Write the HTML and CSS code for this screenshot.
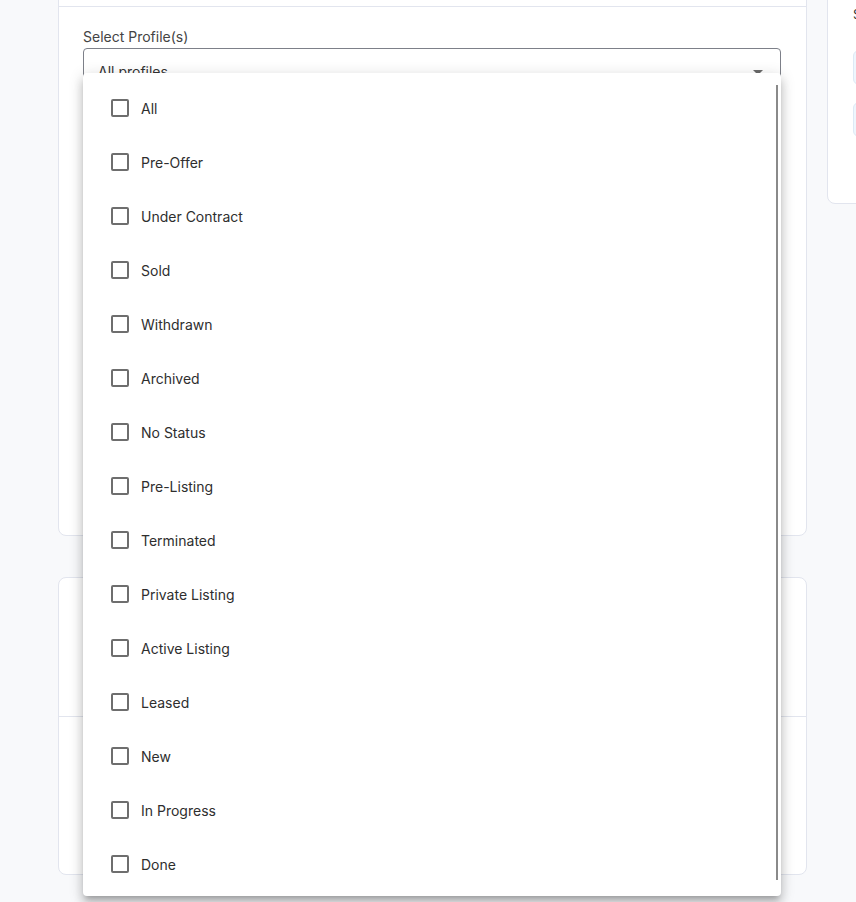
FILE: index.html
```html
<!DOCTYPE html>
<html lang="en">
<head>
<meta charset="utf-8">
<title>Select Profile(s)</title>
<link rel="stylesheet" href="styles.css">
</head>
<body>
<div class="page">
  <div class="main">
    <section class="card card-filter">
      <div class="card-head"></div>
      <div class="card-body">
        <label class="field-label">Select Profile(s)</label>
        <div class="select">
          <span class="select-value">All profiles</span>
          <svg class="select-arrow" width="24" height="24" viewBox="0 0 24 24"><path d="M7 10l5 5 5-5z" fill="#6b6b6b"/></svg>
        </div>
      </div>
    </section>
    <section class="card card-second">
      <div class="card-head tall"></div>
      <div class="card-body"></div>
    </section>
  </div>
  <aside class="side">
    <section class="card card-side">
      <div class="side-title">Summary</div>
      <div class="side-box"></div>
      <div class="side-box"></div>
    </section>
  </aside>
</div>

<div class="menu">
  <ul class="menu-list">
    <li class="opt"><span class="cb"></span><span>All</span></li>
    <li class="opt"><span class="cb"></span><span>Pre-Offer</span></li>
    <li class="opt"><span class="cb"></span><span>Under Contract</span></li>
    <li class="opt"><span class="cb"></span><span>Sold</span></li>
    <li class="opt"><span class="cb"></span><span>Withdrawn</span></li>
    <li class="opt"><span class="cb"></span><span>Archived</span></li>
    <li class="opt"><span class="cb"></span><span>No Status</span></li>
    <li class="opt"><span class="cb"></span><span>Pre-Listing</span></li>
    <li class="opt"><span class="cb"></span><span>Terminated</span></li>
    <li class="opt"><span class="cb"></span><span>Private Listing</span></li>
    <li class="opt"><span class="cb"></span><span>Active Listing</span></li>
    <li class="opt"><span class="cb"></span><span>Leased</span></li>
    <li class="opt"><span class="cb"></span><span>New</span></li>
    <li class="opt"><span class="cb"></span><span>In Progress</span></li>
    <li class="opt"><span class="cb"></span><span>Done</span></li>
  </ul>
  <div class="scroll-thumb"></div>
</div>
</body>
</html>
```

FILE: styles.css
```css
html, body {
  margin: 0;
  padding: 0;
  overflow: hidden;
  height: 100%;
}
body {
  background: #f8f9fb;
  font-family: Inter, "Noto Sans", sans-serif;
  color: #2b2b2b;
}
.page {
  display: flex;
  gap: 20px;
  padding-left: 58px;
  margin-top: -20px;
  width: 1200px;
}
.main {
  width: 749px;
  flex: none;
  display: flex;
  flex-direction: column;
  gap: 41px;
}
.card {
  background: #fff;
  border: 1px solid #e2e5ee;
  border-radius: 8px;
  box-sizing: border-box;
}
.card-head {
  height: 25px;
  border-bottom: 1px solid #e2e5ee;
}
.card-head.tall {
  height: 138px;
}
.card-filter {
  height: 556px;
}
.card-filter .card-body {
  padding: 20px 25px 0 24px;
}
.card-second {
  height: 298px;
}
.field-label {
  display: block;
  font-size: 14px;
  line-height: 20px;
  color: #444;
  margin-bottom: 1px;
}
.select {
  height: 56px;
  border: 1px solid #7d8089;
  border-radius: 4px;
  box-sizing: border-box;
  display: flex;
  align-items: flex-start;
  padding: 11px 10px 0 14px;
  justify-content: space-between;
}
.select-value {
  font-size: 14px;
  line-height: 24px;
  color: #333;
}
.side {
  flex: none;
  width: 300px;
}
.card-side {
  height: 224px;
  padding: 23px 25px 0 25px;
}
.side-title {
  font-size: 13px;
  line-height: 20px;
  color: #333;
  margin-bottom: 26px;
}
.side-box {
  height: 35px;
  border-radius: 6px;
  background: #eef6fd;
  border: 1px solid #dde9f5;
  box-sizing: border-box;
  margin-bottom: 17px;
}

/* dropdown menu overlay */
.menu {
  position: absolute;
  left: 83px;
  top: 73px;
  width: 698px;
  height: 823px;
  background: #fff;
  border-radius: 4px;
  overflow: hidden;
  box-shadow: 0px 5px 5px -3px rgba(0,0,0,0.2), 0px 8px 10px 1px rgba(0,0,0,0.14), 0px 3px 14px 2px rgba(0,0,0,0.12);
}
.menu-list {
  list-style: none;
  margin: 0;
  padding: 8px 0;
}
.opt {
  height: 54px;
  display: flex;
  align-items: center;
  padding-left: 28px;
  gap: 12px;
  font-size: 14px;
  color: #2e2e2e;
}
.cb {
  width: 18px;
  height: 18px;
  box-sizing: border-box;
  border: 2px solid #6e6e6e;
  border-radius: 2px;
  flex: none;
}
.scroll-thumb {
  position: absolute;
  right: 3px;
  top: 12px;
  bottom: 16px;
  width: 2px;
  background: #8a8a8a;
}
```
